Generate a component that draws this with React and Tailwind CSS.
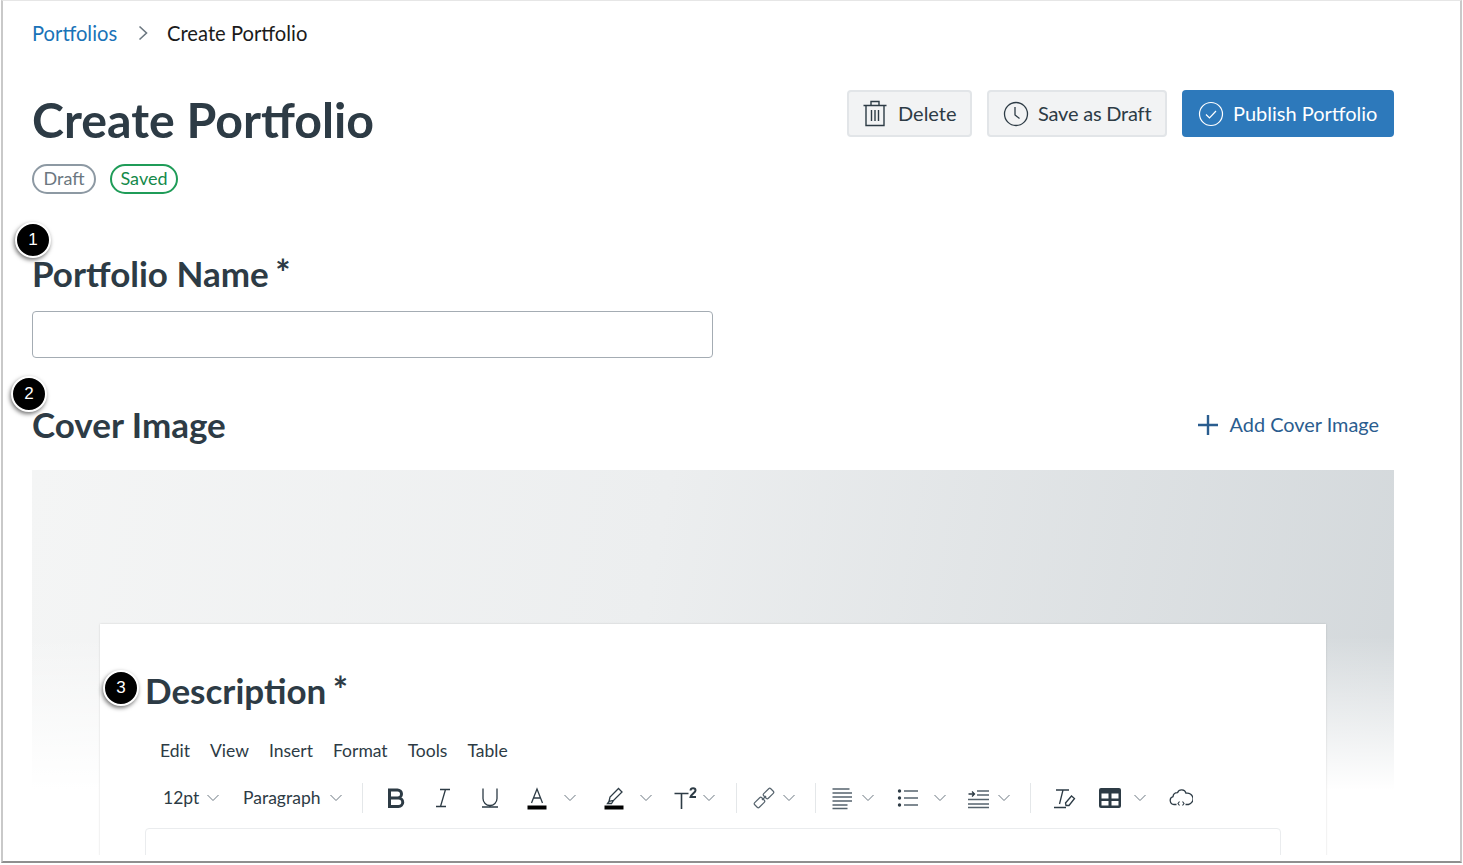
import React from 'react'

const Chevron = ({ className = '' }) => (
  <svg width="12" height="8" viewBox="0 0 12 8" fill="none" stroke="#6b7780" strokeWidth="1" className={className}>
    <path d="M.5 1 6 6.5 11.5 1" />
  </svg>
)

const Icon = ({ className = '', children }) => (
  <svg width="24" height="24" viewBox="0 0 24 24" fill="none" stroke="#2d3b45" strokeWidth="1.3" className={`shrink-0 ${className}`}>
    {children}
  </svg>
)

const Divider = ({ className = '' }) => <div className={`h-[30px] w-px bg-[#e4e7e9] ${className}`}></div>

const Marker = ({ n, className }) => (
  <div className={`absolute flex h-[36px] w-[36px] items-center justify-center rounded-full border-2 border-white bg-black text-[17px] text-white shadow-[-1px_2px_4px_rgba(0,0,0,0.55)] [font-family:'Liberation_Sans',sans-serif] ${className}`}>
    {n}
  </div>
)

const Toolbar = () => (
  <div className="ml-[18px] mt-[18px] flex h-[32px] items-center text-[17.5px] text-[#2d3b45]">
    <span className="w-[35px]">12pt</span>
    <Chevron className="ml-[9px]" />
    <span className="ml-[24px] w-[78px] whitespace-nowrap">Paragraph</span>
    <Chevron className="ml-[9px]" />
    <Divider className="ml-[20px]" />
    <Icon className="ml-[21px]">
      <path strokeWidth="3" d="M5.5 4h8a4 4 0 0 1 0 8h-8zM5.5 12h9a4.2 4.2 0 0 1 0 8.5h-9z" />
    </Icon>
    <Icon className="ml-[23px]">
      <path d="M9 3.5h10M5 20.5h10M14.5 3.5l-5 17" />
    </Icon>
    <Icon className="ml-[23px]">
      <path d="M5 2.5v10a7 7 0 0 0 14 0v-10M4 21h16" />
    </Icon>
    <Icon className="ml-[23px]">
      <path d="M6.5 17 12 3l5.5 14M8.5 12h7" />
      <path stroke="#000" strokeWidth="4" d="M2.5 21.5h19" />
    </Icon>
    <Chevron className="ml-[15px]" />
    <Icon className="ml-[26px]">
      <path d="M7 15.5 8 11 16.5 2.5 20 6l-8.500 8.500zM7 15.5l-1.500 2h4l2-3" />
      <path stroke="#000" strokeWidth="4" d="M2.5 21.5h19" />
    </Icon>
    <Chevron className="ml-[14px]" />
    <Icon className="ml-[21px]">
      <path strokeWidth="1.6" d="M1.5 7.5h14M8.5 7.5V23" />
      <path strokeWidth="2" d="M17.5 4.500c.3-3 5-3 5 0 0 2-4.500 4-5 6.500h5.500" />
    </Icon>
    <Chevron className="ml-[6px]" />
    <Divider className="ml-[21px]" />
    <Icon className="ml-[15px]">
      <g stroke="#56636d" strokeWidth="1.2">
        <rect x="13.25" y="2.5" width="6.5" height="10" rx="1.5" transform="rotate(45 16.5 7.5)" />
        <rect x="4.25" y="11.5" width="6.5" height="10" rx="1.5" transform="rotate(45 7.5 16.5)" />
        <path d="m10 14 4-4" />
      </g>
    </Icon>
    <Chevron className="ml-[7px]" />
    <Divider className="ml-[20px]" />
    <Icon className="ml-[14px]">
      <path stroke="#56636d" strokeWidth="1.5" d="M2.5 3h17M2.5 7h19.500M2.5 11h19.500M2.5 15h19.500M2.5 19h15M2.5 22.5h15" />
    </Icon>
    <Chevron className="ml-[8px]" />
    <Icon className="ml-[22px]">
      <circle cx="3.5" cy="5" r="1.7" fill="#2d3b45" stroke="none" />
      <circle cx="3.5" cy="12" r="1.7" fill="#2d3b45" stroke="none" />
      <circle cx="3.5" cy="19" r="1.7" fill="#2d3b45" stroke="none" />
      <path stroke="#56636d" d="M8 5h14M8 12h14M8 19h14" />
    </Icon>
    <Chevron className="ml-[14px]" />
    <Icon className="ml-[21px]">
      <path stroke="#2d3b45" d="M1.5 8h6M5 5.500 7.500 8 5 10.500" />
      <path stroke="#56636d" strokeWidth="1.5" d="M10 5h12M10 9h12M1 13.5h21M1 18h21M1 21.5h21" />
    </Icon>
    <Chevron className="ml-[7px]" />
    <Divider className="ml-[20px]" />
    <Icon className="ml-[21px]">
      <path d="M4 4h13M11 4 7.500 18M2 21.5h12" />
      <path d="m13.5 17 6-7 3 2.500-5.500 7h-3z" />
    </Icon>
    <svg width="24" height="24" viewBox="0 0 24 24" className="ml-[22px] shrink-0">
      <rect x="1" y="2" width="22" height="20" rx="2" fill="#2d3b45" />
      <rect x="3.5" y="7.5" width="7" height="5" fill="#fff" />
      <rect x="13.5" y="7.5" width="7" height="5" fill="#fff" />
      <rect x="3.5" y="15" width="7" height="4.5" fill="#fff" />
      <rect x="13.5" y="15" width="7" height="4.5" fill="#fff" />
    </svg>
    <Chevron className="ml-[12px]" />
    <Icon className="ml-[23px]">
      <path strokeWidth="1.3" d="M7.5 18.500H5a4 4 0 0 1-1-7.800 4.500 4.500 0 0 1 4.500-4 4.500 4.500 0 0 1 8.500.5 4.500 4.500 0 0 1 2.500 11.300h-3" />
      <path strokeWidth="1.1" d="M10.500 15.500 9 17.500l1.500 2M13.500 15.500l1.500 2-1.500 2" />
    </Icon>
  </div>
)

const App = () => {
  return (
    <div className="h-[865px] w-[1463px] overflow-hidden bg-white font-['Lato',sans-serif]">
      <div className="relative ml-px h-[863px] w-[1461px] border-x-2 border-b-2 border-t border-x-[#c9c9c9] border-b-[#8f8f8f] border-t-[#e6e6e6]">
        <div className="h-[854px] overflow-hidden">
          <div className="ml-[29px] mr-[66px]">
            <div className="flex h-[66px] items-center pb-[2px] text-[20.2px]">
              <span className="w-[85px] text-[#1a73b8]">Portfolios</span>
              <svg width="10" height="16" viewBox="0 0 10 16" fill="none" stroke="#6b7780" strokeWidth="1.6" className="ml-[21px]">
                <path d="m1.5 1.5 7 6.500-7 6.500" />
              </svg>
              <span className="ml-[19px] text-[#1b1b1b]">Create Portfolio</span>
            </div>

            <div className="flex items-start justify-between">
              <h1 className="mt-[23px] text-[48.3px] font-bold leading-[58px] text-[#2d3b45]">Create Portfolio</h1>
              <div className="mt-[23px] flex gap-[15px] text-[20px]">
                <button className="flex h-[47px] w-[125px] items-center rounded-[4px] border-2 border-[#e2e5e8] bg-[#f2f3f4] pl-[14px] text-[#2d3b45]">
                  <svg width="24" height="27" viewBox="0 0 24 27" fill="none" stroke="#2d3b45" strokeWidth="1.4" className="shrink-0">
                    <path d="M.5 5.500h23M8 5.500V1.500h8v4M3 5.500v20h18v-20M8.500 10v11M12 10v11M15.500 10v11" />
                  </svg>
                  <span className="mb-[2px] ml-[11px]">Delete</span>
                </button>
                <button className="flex h-[47px] w-[180px] items-center rounded-[4px] border-2 border-[#e2e5e8] bg-[#f2f3f4] pl-[14px] text-[#2d3b45]">
                  <svg width="26" height="26" viewBox="0 0 26 26" fill="none" stroke="#2d3b45" strokeWidth="1.3">
                    <circle cx="13" cy="13" r="11.5" />
                    <path d="M12 6v8l4.500 3.500" />
                  </svg>
                  <span className="mb-[2px] ml-[9px] tracking-[-0.2px]">Save as Draft</span>
                </button>
                <button className="flex h-[47px] w-[212px] items-center rounded-[4px] bg-[#2d79bb] pl-[16px] text-white">
                  <svg width="26" height="26" viewBox="0 0 26 26" fill="none" stroke="#fff" strokeWidth="1.2">
                    <circle cx="13" cy="13" r="11.5" />
                    <path d="m8 13.500 3.500 3.500L18 10" />
                  </svg>
                  <span className="mb-[2px] ml-[9px]">Publish Portfolio</span>
                </button>
              </div>
            </div>

            <div className="mt-[16px] flex gap-[14px] text-[18px]">
              <span className="flex h-[30px] w-[64px] items-center justify-center rounded-full border-2 border-[#8d99a3] pb-[2px] text-[#6b7780]">Draft</span>
              <span className="flex h-[30px] w-[68px] items-center justify-center rounded-full border-2 border-[#1f9c58] pb-[2px] text-[#14894a]">Saved</span>
            </div>

            <h2 className="mt-[59px] h-[42px] text-[35px] font-bold leading-[40px] text-[#2d3b45]">
              Portfolio Name <span className="relative top-[-1px] ml-[-2px] text-[36px] font-bold leading-[0]">*</span>
            </h2>
            <input className="mt-[16px] block h-[47px] w-[681px] rounded-[4px] border-[1.5px] border-[#a4acb3] bg-white" />

            <div className="mt-[40px] flex h-[50px] items-center justify-between">
              <h2 className="pt-[2px] text-[35px] font-bold text-[#2d3b45]">Cover Image</h2>
              <div className="mr-[15px] flex items-center pt-[4px] text-[19.9px] text-[#2a5d8f]">
                <svg width="20" height="20" viewBox="0 0 20 20" fill="none" stroke="#2a5d8f" strokeWidth="2.4">
                  <path d="M10 0v20M0 10h20" />
                </svg>
                <span className="ml-[12px]">Add Cover Image</span>
              </div>
            </div>

            <div className="mt-[22px] h-[400px] bg-[linear-gradient(to_bottom,transparent_52%,#fff_100%),linear-gradient(100deg,#f4f5f5_0%,#eceeef_45%,#d3d8db_100%)] bg-[length:100%_320px] bg-no-repeat pl-[68px] pr-[68px] pt-[154px]">
              <div className="h-[260px] bg-white shadow-[0_0_2px_rgba(0,0,0,0.15)]">
                <h2 className="ml-[45px] h-[71px] pt-[43px] text-[35px] font-bold leading-[46px] text-[#2d3b45]">
                  Description <span className="relative top-[-1px] ml-[-2px] text-[36px] font-bold leading-[0]">*</span>
                </h2>
                <div className="ml-[45px] mt-[43px] flex gap-[20px] pl-[15px] text-[17.5px] text-[#2d3b45]">
                  <span>Edit</span>
                  <span>View</span>
                  <span>Insert</span>
                  <span>Format</span>
                  <span>Tools</span>
                  <span>Table</span>
                </div>
                <div className="ml-[45px]">
                  <Toolbar />
                </div>
                <div className="ml-[45px] mr-[45px] mt-[14px] h-[40px] rounded-t-[4px] border border-[#eaecee]"></div>
              </div>
            </div>
          </div>
        </div>
        <Marker n="1" className="left-[12px] top-[221px]" />
        <Marker n="2" className="left-[8px] top-[375px]" />
        <Marker n="3" className="left-[100px] top-[669px]" />
      </div>
    </div>
  )
}

export default App
